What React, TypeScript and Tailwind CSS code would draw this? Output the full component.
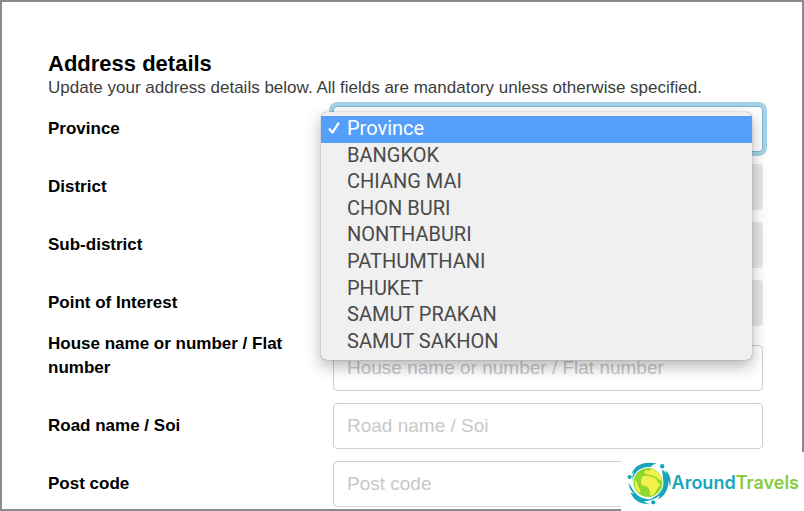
import React, { useState } from 'react';
import { ChevronDown } from 'lucide-react';

const provinces = [
  'Province',
  'BANGKOK',
  'CHIANG MAI',
  'CHON BURI',
  'NONTHABURI',
  'PATHUMTHANI',
  'PHUKET',
  'SAMUT PRAKAN',
  'SAMUT SAKHON',
];

type RowProps = {
  id: string;
  label: string;
  children: React.ReactNode;
};

const Row: React.FC<RowProps> = ({ id, label, children }) => (
  <div className="grid grid-cols-[285px_1fr] items-end pt-1.5 first:pt-0.5">
    <label htmlFor={id} className="pr-5 pb-[11px] text-[17px] leading-6 font-bold text-black">
      {label}
    </label>
    <div className="pt-1.5">{children}</div>
  </div>
);

const DisabledSelect: React.FC<{ id: string }> = ({ id }) => (
  <select id={id} disabled className="block h-[46px] w-full appearance-none rounded bg-[#e8e8e8]" />
);

const TextField: React.FC<{ id: string; placeholder: string }> = ({ id, placeholder }) => (
  <input
    id={id}
    type="text"
    placeholder={placeholder}
    className="block h-[46px] w-full rounded border border-[#cfcfcf] bg-white px-[13px] text-[19px] text-[#333] placeholder:text-[#c8c8c8] outline-none"
  />
);

const ProvinceSelect: React.FC = () => {
  const [value, setValue] = useState('Province');

  return (
    <div className="relative">
      <select
        id="province"
        value={value}
        onChange={(e) => setValue(e.target.value)}
        className="block h-[46px] w-full appearance-none rounded border border-[#7fb4d0] bg-white px-[13px] text-[19px] text-transparent ring-4 ring-[#a6d2e8] outline-none"
      >
        {provinces.map((name) => (
          <option key={name}>{name}</option>
        ))}
      </select>
      <ChevronDown className="pointer-events-none absolute top-3 right-2 h-4 w-4 text-[#4b6b85]" />
      <ul
        role="listbox"
        aria-label="Province"
        className="absolute top-1.5 right-[11px] -left-3 z-10 grid h-62 auto-rows-fr rounded-md bg-[#f0f0f0] pt-1 pb-[5px] font-[Roboto,sans-serif] text-xl shadow-[0_0_1px_rgba(0,0,0,0.6),0_6px_16px_rgba(0,0,0,0.3)]"
      >
        {provinces.map((name) => (
          <li key={name} role="option" aria-selected={name === value} className="flex">
            <button
              type="button"
              onClick={() => setValue(name)}
              className={
                name === value
                  ? 'flex w-full items-center bg-[#559ffb] pb-0.5 text-left leading-6 text-white'
                  : 'flex w-full items-center pb-0.5 text-left leading-6 text-[#4a4a4a]'
              }
            >
              <span className="flex w-[26px] shrink-0 justify-center">
                {name === value && (
                  <svg viewBox="0 0 12 12" className="h-3 w-3" fill="none" stroke="currentColor" strokeWidth="2.2" strokeLinecap="round" strokeLinejoin="round">
                    <path d="M1.6 7.2 4.4 10.6 10.4 1.4" />
                  </svg>
                )}
              </span>
              {name}
            </button>
          </li>
        ))}
      </ul>
    </div>
  );
};

const Logo: React.FC = () => (
  <a
    href="#"
    className="absolute -right-0.5 -bottom-0.5 z-20 flex items-center gap-px bg-white pt-[9px] pr-[5px] pb-1.5 pl-1.5 font-[Inter,sans-serif] text-lg leading-6 font-semibold"
  >
    <svg viewBox="0 0 44 44" className="h-11 w-11 shrink-0">
      <g fill="#14a5b8">
        <path d="M4.5 13C8 4 16 0 30 2.5 27 3 25 4 24 6 14 6.500 9 13 6.500 22 5 18 5 14 7 11Z" />
        <path d="M35 9C37 9.5 38.5 11 39.5 13 39.5 11.5 39 10 38.5 9 43 13 44.5 19 43 26 42.5 23 42 21 41.5 20 41.5 28 38 35 31 38.5 32 36.5 32.5 35.5 32.5 34.5 29 37.500 26 38.500 22 39 33 33 38 23 35 9Z" />
        <path d="M1.5 22C3 24 4.5 26 5.500 28 10 36 17 39 26 38 23 39.5 20 40.2 17 40 18.5 41.5 20.5 42.5 23 43 13 43.5 6 39 3.500 31 5 32 6 32.5 7 33 3.5 29.5 2 26 1.5 22Z" />
        <circle cx="35.2" cy="5.2" r="2.2" />
        <circle cx="2.6" cy="16" r="2.1" />
        <circle cx="26.3" cy="41.3" r="2.1" />
      </g>
      <circle cx="21" cy="21.5" r="15.5" fill="#fff" />
      <circle cx="21" cy="21.5" r="14.5" fill="#8fd92f" />
      <g fill="#f3f04a">
        <path d="M14 19 15 16 18 14.5 22 15 25 16 29 17.5 31 22 33.5 23.5 30 28 28 32 26 34.5 23 34.5 22.5 29 20 25.5 16 25 14 22.5Z" />
        <path d="M17 12 19 9 22 10 25 7.8 30 10.5 34 15 35 20 32 18.5 29 16 25 14.5 21 13.5Z" />
        <path d="M7.5 19 10 21 11.5 26 13.5 30 12 32 8.5 27.5Z" />
      </g>
    </svg>
    <span>
      <span className="text-[#16a6b7]">Around</span>
      <span className="text-[#86cb3c]">Travels</span>
    </span>
  </a>
);

const App: React.FC = () => {
  return (
    <main className="relative min-h-screen border-2 border-[#8a8a8a] bg-white pt-12 pr-[39px] pl-[46px] font-['Liberation_Sans',Arial,sans-serif]">
      <h1 className="text-[22px] leading-7 font-bold text-black">Address details</h1>
      <p className="text-[17px] leading-5 text-[#3c3c3c]">
        Update your address details below. All fields are mandatory unless otherwise specified.
      </p>

      <form>
        <Row id="province" label="Province">
          <ProvinceSelect />
        </Row>
        <Row id="district" label="District">
          <DisabledSelect id="district" />
        </Row>
        <Row id="sub-district" label="Sub-district">
          <DisabledSelect id="sub-district" />
        </Row>
        <Row id="poi" label="Point of Interest">
          <DisabledSelect id="poi" />
        </Row>
        <Row id="house" label="House name or number / Flat number">
          <TextField id="house" placeholder="House name or number / Flat number" />
        </Row>
        <Row id="road" label="Road name / Soi">
          <TextField id="road" placeholder="Road name / Soi" />
        </Row>
        <Row id="post-code" label="Post code">
          <TextField id="post-code" placeholder="Post code" />
        </Row>
      </form>

      <Logo />
    </main>
  );
};

export default App;
